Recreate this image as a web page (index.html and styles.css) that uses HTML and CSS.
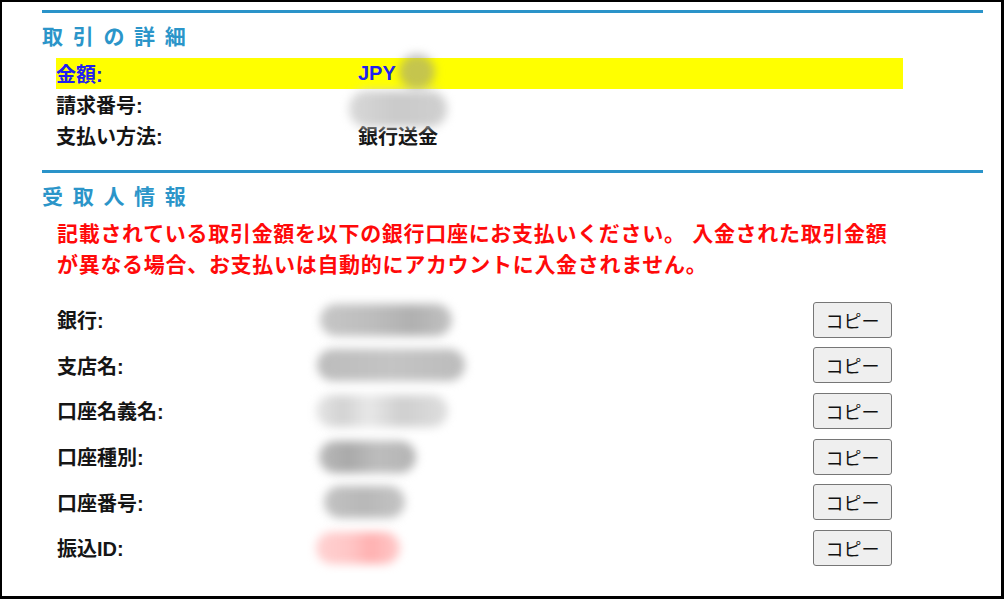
FILE: index.html
```html
<!DOCTYPE html>
<html lang="ja">
<head>
<meta charset="utf-8">
<title>取引の詳細</title>
<link rel="stylesheet" href="styles.css">
</head>
<body>
<div class="frame">
  <div class="rule"></div>
  <h2 class="heading">取引の詳細</h2>
  <div class="details">
    <div class="drow hl"><span class="dlabel">金額:</span><span class="dval">JPY<span class="blob b-jpy"></span></span></div>
    <div class="drow"><span class="dlabel">請求番号:</span><span class="dval"><span class="blob b-inv"></span></span></div>
    <div class="drow"><span class="dlabel">支払い方法:</span><span class="dval">銀行送金</span></div>
  </div>
  <div class="rule rule2"></div>
  <h2 class="heading">受取人情報</h2>
  <p class="notice">記載されている取引金額を以下の銀行口座にお支払いください。 入金された取引金額<br>が異なる場合、お支払いは自動的にアカウントに入金されません。</p>
  <div class="bank">
    <div class="brow"><span class="blabel">銀行:</span><span class="bval"><span class="blob b1"></span></span><button class="copy">コピー</button></div>
    <div class="brow"><span class="blabel">支店名:</span><span class="bval"><span class="blob b2"></span></span><button class="copy">コピー</button></div>
    <div class="brow"><span class="blabel">口座名義名:</span><span class="bval"><span class="blob b3"></span></span><button class="copy">コピー</button></div>
    <div class="brow"><span class="blabel">口座種別:</span><span class="bval"><span class="blob b4"></span></span><button class="copy">コピー</button></div>
    <div class="brow"><span class="blabel">口座番号:</span><span class="bval"><span class="blob b5"></span></span><button class="copy">コピー</button></div>
    <div class="brow"><span class="blabel">振込ID:</span><span class="bval"><span class="blob b6"></span></span><button class="copy">コピー</button></div>
  </div>
</div>
</body>
</html>
```
FILE: styles.css
```css
html, body {
  margin: 0;
  padding: 0;
  background: #fff;
}
body {
  font-family: "Liberation Sans", "Noto Sans CJK JP", sans-serif;
  color: #111;
}
.frame {
  box-sizing: border-box;
  width: 1004px;
  height: 599px;
  border-style: solid;
  border-color: #000;
  border-width: 2px 3px 3px 2px;
  padding: 8px 0 0 40px;
  overflow: hidden;
}
.rule {
  width: 941px;
  height: 3px;
  background: #2a93c9;
}
.rule2 {
  margin-top: 19px;
}
.heading {
  margin: 9px 0 0 0;
  font-size: 21px;
  line-height: 30px;
  font-weight: 700;
  color: #2b95c9;
  letter-spacing: 9.7px;
}
.details {
  margin: 6px 0 0 14px;
  width: 847px;
}
.drow {
  display: flex;
  align-items: center;
  height: 31px;
  font-size: 20px;
  font-weight: 700;
  color: #151515;
}
.drow.hl {
  background: #ffff00;
  color: #2020f0;
}
.dlabel {
  width: 302px;
  flex: none;
}
.dval {
  display: flex;
  align-items: center;
}
.blob {
  display: inline-block;
  border-radius: 17px;
  filter: blur(5px);
}
.b-jpy {
  width: 36px;
  height: 36px;
  border-radius: 50%;
  margin-left: 3px;
  margin-top: -3px;
  background: rgba(150, 150, 140, 0.55);
}
.b-inv {
  width: 98px;
  height: 36px;
  margin-left: -9px;
  margin-top: 8px;
  background: linear-gradient(90deg, #d8d8d8, #cacaca 50%, #d0d0d0);
}
.notice {
  margin: 6px 0 0 15px;
  font-size: 21px;
  line-height: 31px;
  font-weight: 700;
  color: #ff0a0a;
  letter-spacing: 0.7px;
}
.bank {
  margin: 17px 0 0 14px;
}
.brow {
  display: grid;
  grid-template-columns: 264px 493px 79px;
  align-items: center;
  height: 45.6px;
}
.blabel {
  font-size: 20px;
  font-weight: 700;
  color: #151515;
  padding-left: 1px;
}
.bval {
  display: flex;
  align-items: center;
}
.copy {
  box-sizing: border-box;
  width: 79px;
  height: 36px;
  padding: 0;
  font-family: "Noto Sans CJK JP", sans-serif;
  font-size: 18px;
  font-weight: 400;
  color: #111;
  background: #efefef;
  border: 1px solid #767676;
  border-radius: 3px;
}
.b1 {
  width: 132px;
  height: 32px;
  margin-left: 0;
  background: linear-gradient(90deg, #c6c6c6, #bdbdbd 40%, #b0b0b0 70%, #c2c2c2);
}
.b2 {
  width: 148px;
  height: 32px;
  margin-left: -3px;
  background: linear-gradient(90deg, #bcbcbc, #c4c4c4 50%, #bcbcbc);
}
.b3 {
  width: 132px;
  height: 32px;
  margin-left: -4px;
  background: linear-gradient(90deg, #e6e6e6, #d2d2d2 20%, #e8e8e8 40%, #cfcfcf 65%, #dedede);
}
.b4 {
  width: 97px;
  height: 32px;
  margin-left: -1px;
  background: linear-gradient(90deg, #bababa, #a9a9a9 30%, #bdbdbd 60%, #b4b4b4);
}
.b5 {
  width: 81px;
  height: 32px;
  margin-left: 4px;
  background: linear-gradient(90deg, #c2c2c2, #b8b8b8 50%, #c4c4c4);
}
.b6 {
  width: 84px;
  height: 32px;
  margin-left: -4px;
  background: linear-gradient(90deg, #ffd2d2, #ffc6c6 40%, #ffb0b0 65%, #ffcaca);
}
```
